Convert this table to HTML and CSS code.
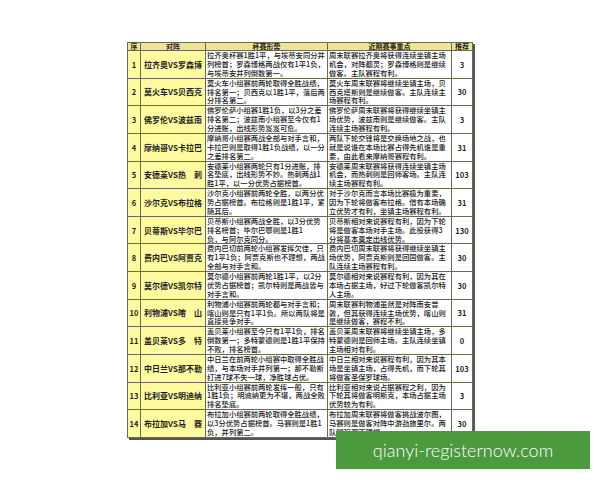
FILE: index.html
```html
<!DOCTYPE html>
<html lang="zh-CN">
<head>
<meta charset="utf-8">
<title>赛事推荐</title>
<link rel="stylesheet" href="styles.css">
</head>
<body>
<div class="page">
<table class="match-table">
<colgroup>
<col class="c-no"><col class="c-team"><col class="c-cup"><col class="c-recent"><col class="c-rec">
</colgroup>
<thead>
<tr><th>序</th><th>对阵</th><th>杯赛形势</th><th>近期赛事重点</th><th>推荐</th></tr>
</thead>
<tbody>
<tr><td class="no">1</td><td class="team">拉齐奥VS罗森博</td><td class="txt">拉齐奥杯赛1胜1平，与埃蒂安同分并<br>列榜首；罗森博格两战仅有1平1负，<br>与埃蒂安并列倒数第一。</td><td class="txt">周末联赛拉齐奥将获得连续坐镇主场<br>机会，对阵都灵；罗森博格则是继续<br>做客。主队赛程有利。</td><td class="rec">3</td></tr>
<tr><td class="no">2</td><td class="team">莫火车VS贝西克</td><td class="txt">莫火车小组赛前两轮取得全胜战绩，<br>排名第一；贝西克以1胜1平，落后两<br>分排名第二。</td><td class="txt">莫火车周末联赛将继续坐镇主场，贝<br>西克塔斯则是继续做客。主队连续主<br>场赛程有利。</td><td class="rec">30</td></tr>
<tr><td class="no">3</td><td class="team">佛罗伦VS波兹南</td><td class="txt">佛罗伦萨小组赛1胜1负，以3分之差<br>排名第二；波兹南小组赛至今仅有1<br>分进账，出线形势岌岌可危。</td><td class="txt">佛罗伦萨周末联赛将获得继续坐镇主<br>场优势，波兹南则是继续做客。主队<br>连续主场赛程有利。</td><td class="rec">3</td></tr>
<tr><td class="no">4</td><td class="team">摩纳哥VS卡拉巴</td><td class="txt">摩纳哥小组赛两战全部与对手言和，<br>卡拉巴则是取得1胜1负战绩，以一分<br>之差排名第二。</td><td class="txt">两队下轮交锋将是交换场地之战，也<br>就是说谁在本场比赛占得先机谁是重<br>要，由此看来摩纳哥赛程有利。</td><td class="rec">31</td></tr>
<tr><td class="no">5</td><td class="team">安德莱VS热　刺</td><td class="txt">安德莱小组赛两轮只有1分进账，排<br>名垫底，出线形势不妙。热刺两战1<br>胜1平，以一分优势占据榜首。</td><td class="txt">安德莱周末联赛将获得连续坐镇主场<br>机会，而热刺则是回师客场。主队连<br>续主场赛程有利。</td><td class="rec">103</td></tr>
<tr><td class="no">6</td><td class="team">沙尔克VS布拉格</td><td class="txt">沙尔克小组赛前两轮全胜，以两分优<br>势占据榜首。布拉格则是1胜1平，紧<br>随其后。</td><td class="txt">对于沙尔克而言本场比赛极为重要，<br>因为下轮将做客布拉格。借有本场确<br>立优势才有利，坐镇主场赛程有利。</td><td class="rec">31</td></tr>
<tr><td class="no">7</td><td class="team">贝蒂斯VS毕尔巴</td><td class="txt">贝蒂斯小组赛两战全胜，以3分优势<br>排名榜首；毕尔巴鄂则是1胜1<br>负，与阿尔克同分。</td><td class="txt">贝蒂斯相对来说赛程有利，因为下轮<br>将是做客本场对手主场。此役获得3<br>分将基本奠定出线优势。</td><td class="rec">130</td></tr>
<tr><td class="no">8</td><td class="team">费内巴VS阿贾克</td><td class="txt">费内巴切前两轮小组赛发挥欠佳，只<br>有1平1负；阿贾克斯也不理想，两战<br>全部与对手言和。</td><td class="txt">费内巴切周末联赛将获得继续坐镇主<br>场优势，阿贾克斯则是回国做客。主<br>队连续主场赛程有利。</td><td class="rec">30</td></tr>
<tr><td class="no">9</td><td class="team">莫尔德VS凯尔特</td><td class="txt">莫尔德小组赛前两轮1胜1平，以2分<br>优势占据榜首；凯尔特则是两战皆与<br>对手言和。</td><td class="txt">莫尔德相对来说赛程有利，因为其在<br>本场占据主场，好过下轮做客凯尔特<br>人主场。</td><td class="rec">30</td></tr>
<tr><td class="no">10</td><td class="team">利物浦VS喀　山</td><td class="txt">利物浦小组赛前两轮都与对手言和；<br>喀山则是只有1平1负。所以两队将是<br>直接竞争对手。</td><td class="txt">周末联赛利物浦虽然是对阵南安普<br>敦，但其获得连续主场优势，喀山则<br>是继续做客，赛程不利。</td><td class="rec">31</td></tr>
<tr><td class="no">11</td><td class="team">盖贝莱VS多　特</td><td class="txt">盖贝莱小组赛至今只有1平1负，排名<br>倒数第一；多特蒙德则是1胜1平保持<br>不败，排名榜首。</td><td class="txt">盖贝莱周末联赛将继续坐镇主场，多<br>特蒙德则是回师主场。主队连续坐镇<br>主场相对有利。</td><td class="rec">0</td></tr>
<tr><td class="no">12</td><td class="team">中日兰VS那不勒</td><td class="txt">中日兰在前两轮小组赛中取得全胜战<br>绩，与本场对手并列第一；那不勒斯<br>打进7球不失一球，净胜球占优。</td><td class="txt">中日兰相对来说赛程有利，因为其本<br>场是坐镇主场，占得先机，而下轮其<br>将做客圣保罗球场。</td><td class="rec">103</td></tr>
<tr><td class="no">13</td><td class="team">比利亚VS明迪纳</td><td class="txt">比利亚小组赛前两轮发挥一般，只有<br>1胜1负；明迪纳更为不堪，两战全败<br>排名垫底。</td><td class="txt">比利亚相对来说占据赛程之利，因为<br>下轮其将做客明斯克，本场占据主场<br>优势较为有利。</td><td class="rec">3</td></tr>
<tr><td class="no">14</td><td class="team">布拉加VS马　赛</td><td class="txt">布拉加小组赛前两轮取得全胜战绩，<br>以3分优势占据榜首。马赛则是1胜1<br>负，并列第二。</td><td class="txt">布拉加周末联赛将做客挑战波尔图，<br>马赛则是做客对阵中游劲旅里尔。两<br>队赛程都不理想。</td><td class="rec">30</td></tr>
</tbody>
</table>
<div class="watermark">qianyi-registernow.com</div>
</div>
</body>
</html>
```
FILE: styles.css
```css
html, body {
  margin: 0;
  padding: 0;
  background: #ffffff;
}
.page {
  position: relative;
  width: 600px;
  height: 480px;
  padding-top: 42px;
  box-sizing: border-box;
}
.match-table {
  margin: 0 auto;
  width: 345px;
  table-layout: fixed;
  border-collapse: collapse;
  border: 1px solid #3f3f2a;
  box-shadow: 2px 2px 0 #555;
  font-family: "Noto Sans CJK SC", "Liberation Sans", sans-serif;
  color: #1e1e1e;
}
.c-no { width: 13px; }
.c-team { width: 65px; }
.c-cup { width: 122px; }
.c-recent { width: 124px; }
.c-rec { width: 21px; }
.match-table th {
  background: #efe492;
  border: 1px solid #6b6b55;
  font-size: 7px;
  line-height: 7px;
  font-weight: 700;
  padding: 0;
  text-align: center;
  color: #1e1e1e;
}
.match-table td {
  border: 1px solid #6b6b55;
  padding: 0 1px;
  vertical-align: middle;
}
.no {
  background: #fefaa0;
  font-size: 7.5px;
  font-weight: 700;
  text-align: center;
}
.team {
  background: #fefaa0;
  font-size: 8px;
  font-weight: 700;
  text-align: center;
  white-space: nowrap;
}
.txt {
  background: #ffffff;
  font-size: 7.3px;
  font-weight: 500;
  line-height: 8.87px;
  white-space: nowrap;
  overflow: hidden;
  color: #222222;
}
.rec {
  background: #ffffff;
  font-size: 7.5px;
  font-weight: 700;
  text-align: center;
}
.watermark {
  position: absolute;
  left: 336px;
  top: 431px;
  width: 254px;
  height: 38px;
  background: #4c9a3e;
  color: #ffffff;
  font-family: Lato, "Open Sans", sans-serif;
  font-weight: 300;
  font-size: 18px;
  line-height: 38px;
  text-align: center;
}
```
